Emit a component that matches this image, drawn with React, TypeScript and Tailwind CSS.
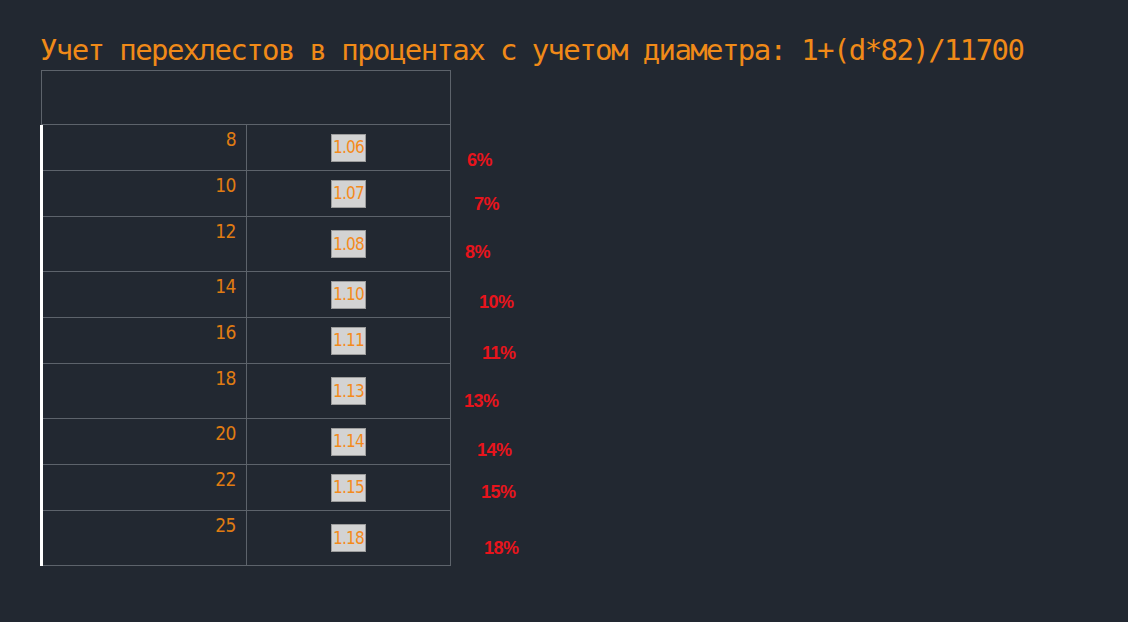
import React from 'react';

const rows = [
  { d: 8, k: '1.06', h: 'h-[46px]', pct: '6%', lx: 'ml-[16px]', ly: 'pt-[26px]' },
  { d: 10, k: '1.07', h: 'h-[46px]', pct: '7%', lx: 'ml-[23px]', ly: 'pt-[24px]' },
  { d: 12, k: '1.08', h: 'h-[55px]', pct: '8%', lx: 'ml-[14px]', ly: 'pt-[26px]' },
  { d: 14, k: '1.10', h: 'h-[46px]', pct: '10%', lx: 'ml-[28px]', ly: 'pt-[21px]' },
  { d: 16, k: '1.11', h: 'h-[46px]', pct: '11%', lx: 'ml-[31px]', ly: 'pt-[26px]' },
  { d: 18, k: '1.13', h: 'h-[55px]', pct: '13%', lx: 'ml-[13px]', ly: 'pt-[28px]' },
  { d: 20, k: '1.14', h: 'h-[46px]', pct: '14%', lx: 'ml-[26px]', ly: 'pt-[22px]' },
  { d: 22, k: '1.15', h: 'h-[46px]', pct: '15%', lx: 'ml-[30px]', ly: 'pt-[18px]' },
  { d: 25, k: '1.18', h: 'h-[55px]', pct: '18%', lx: 'ml-[33px]', ly: 'pt-[28px]' },
];

const narrow = "font-['Liberation_Sans_Narrow','DejaVu_Sans_Condensed','Roboto_Condensed',Roboto,sans-serif]";

export default function App() {
  return (
    <div className="w-[1128px] h-[622px] bg-[#222831] overflow-hidden pl-[40px] pt-[33px]">
      {/* Title */}
      <h1 className="font-['DejaVu_Sans_Mono',monospace] text-[29px] leading-[35px] tracking-[-1.6px] text-[#f08a18] whitespace-nowrap">
        Учет перехлестов в процентах с учетом диаметра: 1+(d*82)/11700
      </h1>

      {/* Header row */}
      <div className="ml-px mt-[2px] w-[410px] h-[55px] border border-[#5d636b]" />

      {/* Body */}
      <div className="border-l-[3px] border-white w-max">
        {rows.map((r) => (
          <div key={r.d} className="flex">
            <div className={`flex ${r.h} w-[408px] border-b border-r border-[#5d636b]`}>
              <div className={`w-[204px] border-r border-[#5d636b] flex justify-end pt-[3px] pr-[10px] ${narrow} text-[19px] leading-[22px] tracking-[-0.5px] text-[#e07c12]`}>
                {r.d}
              </div>
              <div className="flex-1 flex items-center justify-center">
                <span className={`bg-[#d3d3d3] border border-[#9c9c9c] px-[1px] h-[28px] flex items-center ${narrow} text-[17px] leading-none tracking-[-0.8px] text-[#f48a1c]`}>
                  {r.k}
                </span>
              </div>
            </div>
            <div className={`${r.lx} ${r.ly} font-['Liberation_Sans',Arial,sans-serif] font-bold text-[18px] leading-none tracking-[-0.5px] text-[#e8141c]`}>
              {r.pct}
            </div>
          </div>
        ))}
      </div>
    </div>
  );
}
